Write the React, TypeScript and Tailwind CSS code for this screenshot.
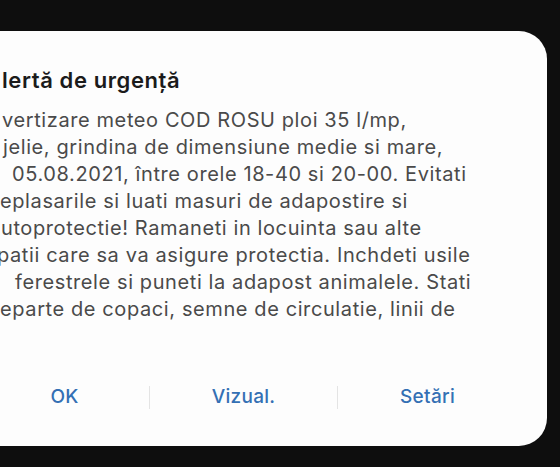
import React from "react";

const lines: { text: string; ml: string }[] = [
  { text: "vertizare meteo COD ROSU ploi 35 l/mp,", ml: "ml-[2px]" },
  { text: "jelie, grindina de dimensiune medie si mare,", ml: "ml-[3px]" },
  { text: "05.08.2021, între orele 18-40 si 20-00. Evitati", ml: "ml-[12px]" },
  { text: "eplasarile si luati masuri de adapostire si", ml: "ml-[0px]" },
  { text: "utoprotectie! Ramaneti in locuinta sau alte", ml: "ml-[1px]" },
  { text: "patii care sa va asigure protectia. Inchdeti usile", ml: "ml-[-3px]" },
  { text: "ferestrele si puneti la adapost animalele. Stati", ml: "ml-[15px]" },
  { text: "eparte de copaci, semne de circulatie, linii de", ml: "ml-[0px]" },
];

export default function App() {
  return (
    <div
      className="w-[560px] h-[467px] bg-[#0e0e0e] overflow-hidden pt-[31px]"
      style={{ fontFamily: "Inter, Roboto, sans-serif" }}
    >
      <div className="ml-[-40px] w-[587px] h-[415px] bg-[#fdfdfd] rounded-[28px] flex flex-col pl-[40px] pt-[35px]">
        <div className="text-[22px] leading-[28px] font-semibold tracking-[0.6px] text-[#1b1b1b] ml-[2px] whitespace-nowrap">
          lertă de urgență
        </div>
        <div className="mt-[13px] flex flex-col text-[20px] leading-[27px] tracking-[0.6px] text-[#4a4a4a] whitespace-nowrap">
          {lines.map((l, i) => (
            <div key={i} className={l.ml}>
              {l.text}
            </div>
          ))}
        </div>
        <div className="mt-auto mb-[21px] h-[56px] ml-[-40px] flex items-center text-[19px] leading-[24px] font-medium tracking-[0.3px] text-[#3470b4]">
          <div className="w-[189px] flex justify-center pl-[20px]">OK</div>
          <div className="w-px h-[23px] bg-[#e4e4e4]" />
          <div className="w-[187px] flex justify-center">Vizual.</div>
          <div className="w-px h-[23px] bg-[#e4e4e4]" />
          <div className="w-[187px] flex justify-center pr-[8px]">Setări</div>
        </div>
      </div>
    </div>
  );
}
